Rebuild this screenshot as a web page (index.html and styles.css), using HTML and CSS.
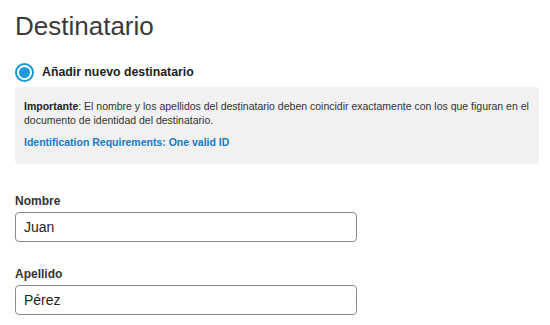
FILE: index.html
```html
<!DOCTYPE html>
<html lang="es">
<head>
<meta charset="utf-8">
<title>Destinatario</title>
<link rel="stylesheet" href="styles.css">
</head>
<body>
<main class="page">
  <h1 class="title">Destinatario</h1>
  <label class="radio-row">
    <span class="radio"><span class="radio-dot"></span></span>
    <span class="radio-label">Añadir nuevo destinatario</span>
  </label>
  <div class="notice">
    <p class="notice-text"><strong>Importante</strong>: El nombre y los apellidos del destinatario deben coincidir exactamente con los que figuran en el documento de identidad del destinatario.</p>
    <a class="notice-link" href="#">Identification Requirements: One valid ID</a>
  </div>
  <div class="field field-first">
    <label class="field-label" for="nombre">Nombre</label>
    <input class="field-input" id="nombre" type="text" value="Juan">
  </div>
  <div class="field">
    <label class="field-label" for="apellido">Apellido</label>
    <input class="field-input" id="apellido" type="text" value="Pérez">
  </div>
</main>
</body>
</html>
```

FILE: styles.css
```css
html, body {
  margin: 0;
  padding: 0;
  background: #ffffff;
}
body {
  font-family: "Liberation Sans", Arial, sans-serif;
  color: #222;
}
.page {
  padding: 0 11px 0 15px;
}
.title {
  margin: 10px 0 0;
  font-size: 26px;
  line-height: 32px;
  font-weight: normal;
  color: #3a3a3a;
}
.radio-row {
  display: flex;
  align-items: center;
  gap: 8px;
  margin-top: 20px;
  height: 20px;
}
.radio {
  box-sizing: border-box;
  width: 19px;
  height: 19px;
  border-radius: 50%;
  border: 2px solid #1a9ad6;
  display: flex;
  align-items: center;
  justify-content: center;
  background: #fff;
}
.radio-dot {
  width: 11px;
  height: 11px;
  border-radius: 50%;
  background: #1a9ad6;
}
.radio-label {
  font-size: 12.3px;
  font-weight: bold;
  color: #1e1e1e;
}
.notice {
  margin-top: 5px;
  background: #f1f1f1;
  border-radius: 4px;
  padding: 12px 9px 15px;
}
.notice-text {
  margin: 0;
  font-size: 10.5px;
  line-height: 14px;
  color: #333;
}
.notice-text strong {
  color: #222;
}
.notice-link {
  display: block;
  margin-top: 8px;
  font-size: 10.5px;
  line-height: 14px;
  font-weight: bold;
  color: #1a78c2;
  text-decoration: none;
}
.field {
  display: flex;
  flex-direction: column;
  width: 342px;
  margin-top: 25px;
}
.field-first {
  margin-top: 30px;
}
.field-label {
  font-size: 12px;
  line-height: 15px;
  font-weight: bold;
  color: #333;
  margin-bottom: 3px;
}
.field-input {
  box-sizing: border-box;
  height: 30px;
  width: 100%;
  border: 1px solid #8a8a8a;
  border-radius: 4px;
  padding: 0 8px;
  font-family: "Liberation Sans", Arial, sans-serif;
  font-size: 14px;
  color: #222;
  background: #fff;
  outline: none;
}
```
